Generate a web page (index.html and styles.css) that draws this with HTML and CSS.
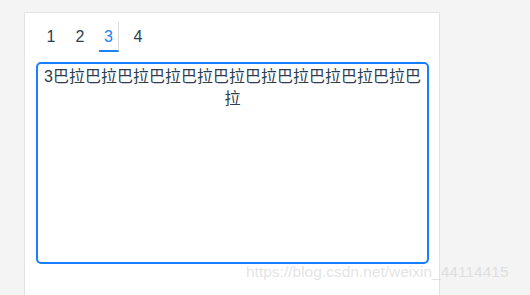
FILE: index.html
```html
<!DOCTYPE html>
<html>
<head>
<meta charset="utf-8">
<link rel="stylesheet" href="styles.css">
</head>
<body>
<div class="panel">
  <div class="tabs">
    <div class="tab">1</div>
    <div class="tab">2</div>
    <div class="tab active">3</div>
    <div class="tab">4</div>
  </div>
  <div class="editor">3巴拉巴拉巴拉巴拉巴拉巴拉巴拉巴拉巴拉巴拉巴拉巴拉</div>
</div>
<div class="watermark">https://blog.csdn.net/weixin_44114415</div>
</body>
</html>
```
FILE: styles.css
```css
html, body {
  margin: 0;
  padding: 0;
  height: 100%;
  overflow: hidden;
}
body {
  background: #f4f4f4;
  font-family: "Liberation Sans", "Noto Sans CJK SC", sans-serif;
  color: #2c3e50;
  position: relative;
}
.panel {
  box-sizing: border-box;
  margin: 12px 0 0 24px;
  width: 416px;
  height: calc(100% - 12px);
  background: #fff;
  border: 1px solid #e3e3e3;
  border-bottom: 0;
  padding: 9px 10px 0 11px;
}
.tabs {
  display: flex;
  gap: 9px;
  margin-left: 5px;
  height: 30px;
}
.tab {
  box-sizing: border-box;
  width: 20px;
  height: 30px;
  line-height: 28px;
  text-align: center;
  font-size: 16px;
  padding-top: 1px;
}
.tab.active {
  color: #1a82ff;
  border-right: 1px solid #dcdcdc;
  border-bottom: 2px solid #1a82ff;
}
.editor {
  box-sizing: border-box;
  margin-top: 10px;
  width: 393px;
  height: 202px;
  border: 2px solid #1a7fff;
  border-radius: 5px;
  padding: 2px 6px;
  text-align: center;
  font-size: 16px;
  line-height: 22px;
  color: #2c3e50;
}
.watermark {
  position: absolute;
  left: 246px;
  top: 262px;
  font-size: 15.5px;
  line-height: 20px;
  color: rgba(200, 200, 200, 0.5);
  white-space: nowrap;
}
```
